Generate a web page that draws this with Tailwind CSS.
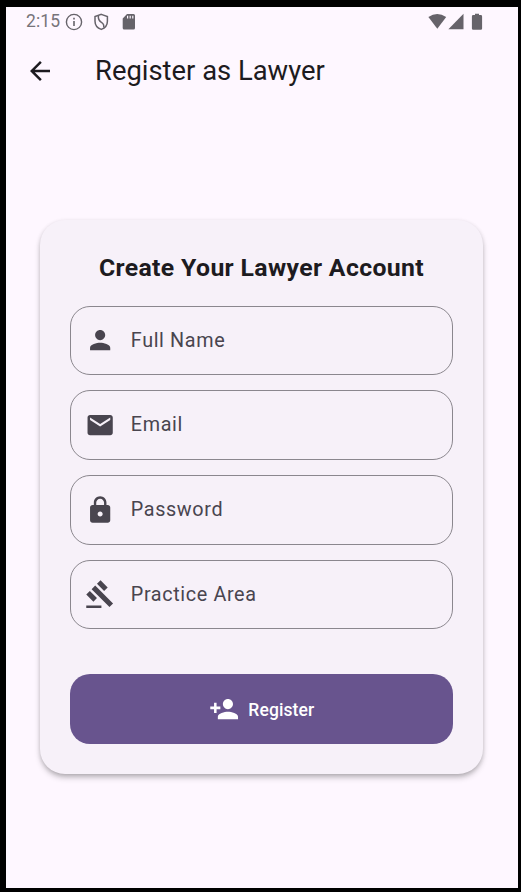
<!DOCTYPE html>
<html lang="en">
<head>
<meta charset="utf-8">
<title>Register as Lawyer</title>
<script src="https://cdn.jsdelivr.net/npm/@tailwindcss/browser@4"></script>
</head>
<body class="bg-black w-[521px] h-[892px] overflow-hidden pl-[6px] pt-[7px] font-['Roboto',sans-serif]">
<div class="w-[512px] h-[880.5px] bg-[#fef7ff] flex flex-col">
  <header class="h-[29px] flex items-center justify-between pl-5 pr-[35px] text-[#66636a] shrink-0">
    <div class="flex items-center">
      <span class="w-[39px] text-[17.5px] leading-[29px] tracking-[0.1px] text-[#77747a]">2:15</span>
      <svg class="w-[18px] h-[18px]" viewBox="0 0 18 18" fill="none" stroke="currentColor"><circle cx="9" cy="9" r="7.6" stroke-width="1.4"/><path d="M9 8v5M9 4.8v1.6" stroke-width="1.6"/></svg>
      <svg class="w-[16px] h-[18px] ml-[10px]" viewBox="0 0 16 18" fill="none" stroke="currentColor" stroke-width="1.5"><path d="M8.300 1.400 14.400 3.600V8.200C14.400 12 12 15 8.300 16.400 4.400 15 2 12 2 8.200V3.600Z"/><path d="M5.400 3C5 6.500 6.200 8 8.400 9.300 10.700 10.700 11.200 12 10.700 14.500"/></svg>
      <svg class="w-[14px] h-[18px] ml-[13px]" viewBox="0 0 14 18" fill="currentColor"><path fill-rule="evenodd" d="M5 1H11.500Q13 1 13 2.500V15Q13 16.500 11.500 16.500H2.200Q.7 16.500.7 15V5.500ZM5 2.800V5.500h1.200V2.800ZM7.600 2.800V5.500h1.200V2.800ZM10.200 2.800V5.500h1.200V2.800Z"/></svg>
    </div>
    <div class="flex items-center">
      <svg class="w-[19px] h-[18px]" viewBox="0 0 19 18" fill="currentColor"><path d="M.4 4.100Q9.200-2 18.200 4.100L9.300 15.700Z"/></svg>
      <svg class="w-[16px] h-[18px] ml-px" viewBox="0 0 16 18" fill="currentColor"><path d="M.4 16.300 15.500.7V16.300Z"/></svg>
      <svg class="w-[12px] h-[18px] ml-[7px]" viewBox="0 0 12 18" fill="currentColor"><path d="M4 .7H8V2.100H9.800Q11.100 2.100 11.100 3.400V15.500Q11.100 16.800 9.800 16.800H2.200Q.9 16.800.9 15.500V3.400Q.9 2.100 2.200 2.100H4Z"/></svg>
    </div>
  </header>
  <nav class="h-[70px] flex items-center pl-[19px] shrink-0 text-[#1d1b20]">
    <svg class="w-[30px] h-[30px]" viewBox="0 0 24 24" fill="currentColor"><path d="M20 11H7.830l5.590-5.590L12 4l-8 8 8 8 1.410-1.410L7.830 13H20v-2z"/></svg>
    <h1 class="ml-[40px] text-[27.4px] leading-[36px] whitespace-nowrap">Register as Lawyer</h1>
  </nav>
  <main class="mt-[113.500px] ml-[34px] w-[443px] h-[554.500px] rounded-[25px] bg-[#f7f1f9] px-[30px] pt-[30px] shadow-[0_4px_6px_-1px_rgba(0,0,0,0.28),0_1px_4px_rgba(0,0,0,0.10)] flex flex-col text-[#49454f]">
    <h2 class="text-center text-[24.800px] leading-[36px] font-bold tracking-[0.35px] text-[#1d1b20] whitespace-nowrap">Create Your Lawyer Account</h2>
    <div class="mt-[20px] flex flex-col gap-[15px]">
      <div class="h-[69.700px] rounded-[20px] border border-[#8b878e] flex items-center pl-[14px]">
        <svg class="w-[30.300px] h-[30.300px]" viewBox="0 0 24 24" fill="currentColor"><path d="M12 12c2.210 0 4-1.790 4-4s-1.790-4-4-4-4 1.790-4 4 1.790 4 4 4zm0 2c-2.670 0-8 1.340-8 4v2h16v-2c0-2.660-5.330-4-8-4z"/></svg>
        <span class="ml-[15.500px] pt-[0.600px] text-[19.800px] leading-[30px] tracking-[0.63px]">Full Name</span>
      </div>
      <div class="h-[69.700px] rounded-[20px] border border-[#8b878e] flex items-center pl-[14px]">
        <svg class="w-[30.300px] h-[30.300px]" viewBox="0 0 24 24" fill="currentColor"><path d="M20 4H4c-1.100 0-1.990.9-1.990 2L2 18c0 1.100.9 2 2 2h16c1.100 0 2-.9 2-2V6c0-1.100-.9-2-2-2zm0 4l-8 5-8-5V6l8 5 8-5v2z"/></svg>
        <span class="ml-[15.500px] pt-[0.600px] text-[19.800px] leading-[30px] tracking-[0.63px]">Email</span>
      </div>
      <div class="h-[69.700px] rounded-[20px] border border-[#8b878e] flex items-center pl-[14px]">
        <svg class="w-[30.300px] h-[30.300px]" viewBox="0 0 24 24" fill="currentColor"><path d="M18 8h-1V6c0-2.760-2.240-5-5-5S7 3.240 7 6v2H6c-1.100 0-2 .9-2 2v10c0 1.100.9 2 2 2h12c1.100 0 2-.9 2-2V10c0-1.100-.9-2-2-2zm-6 9c-1.100 0-2-.9-2-2s.9-2 2-2 2 .9 2 2-.9 2-2 2zm3.100-9H8.900V6c0-1.710 1.390-3.100 3.100-3.100 1.710 0 3.100 1.390 3.100 3.100v2z"/></svg>
        <span class="ml-[15.500px] pt-[0.600px] text-[19.800px] leading-[30px] tracking-[0.63px]">Password</span>
      </div>
      <div class="h-[69.700px] rounded-[20px] border border-[#8b878e] flex items-center pl-[14px]">
        <svg class="w-[30.300px] h-[30.300px]" viewBox="0 0 24 24" fill="currentColor"><path d="M1 21h12v2H1zM5.245 8.070l2.830-2.827 14.140 14.142-2.828 2.828zM12.317 1l5.657 5.656-2.830 2.830-5.654-5.660zM3.825 9.485l5.657 5.657-2.828 2.828-5.657-5.657z"/></svg>
        <span class="ml-[15.500px] pt-[0.600px] text-[19.800px] leading-[30px] tracking-[0.63px]">Practice Area</span>
      </div>
    </div>
    <button class="mt-[45px] h-[69.700px] w-full rounded-[20px] bg-[#68548e] text-white flex items-center pl-[138.500px] shrink-0">
      <svg class="w-[30.300px] h-[30.300px]" viewBox="0 0 24 24" fill="currentColor"><path d="M15 12c2.210 0 4-1.790 4-4s-1.790-4-4-4-4 1.790-4 4 1.790 4 4 4zm-9-2V7H4v3H1v2h3v3h2v-3h3v-2H6zm9 4c-2.670 0-8 1.340-8 4v2h16v-2c0-2.660-5.330-4-8-4z"/></svg>
      <span class="ml-[9.500px] pt-px text-[17.500px] leading-[24px] font-medium tracking-[0.1px]">Register</span>
    </button>
  </main>
</div>
</body>
</html>
